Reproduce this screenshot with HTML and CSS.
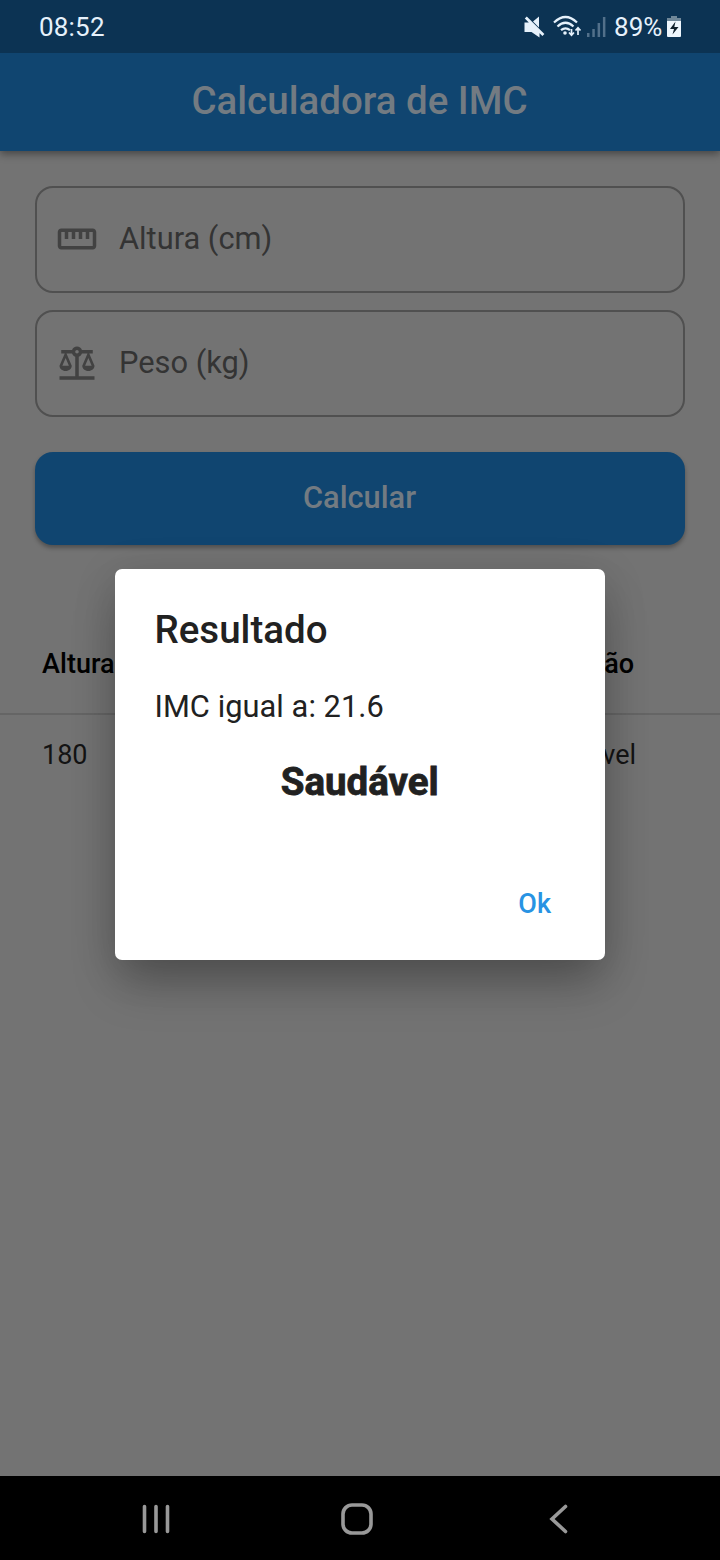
FILE: index.html
```html
<!DOCTYPE html>
<html lang="pt-BR">
<head>
<meta charset="utf-8">
<title>Calculadora de IMC</title>
<link rel="stylesheet" href="styles.css">
</head>
<body>
<div class="phone">
  <div class="status">
    <span class="clock">08:52</span>
    <div class="indicators">
      <svg class="mute" width="22" height="24" viewBox="0 0 22 24"><path d="M.5 7.500H6L15.500 17v5.500L7.500 17h-7zM9 6.500l6-5V12.500zM.8 3.400L2.800 1.400 20.400 19 18.400 21z" fill="#e6f1fb"/></svg>
      <svg class="wifi" width="30" height="24" viewBox="0 0 30 24"><g fill="none" stroke="#e6f1fb" stroke-width="2.200"><path d="M1 7.500Q12.500 -3.500 24 7.500M4.500 11.500Q12.500 4 20.500 11.500M8 15.200Q12.500 11.500 17 15.200"/><path stroke-width="1.700" d="M18.500 14v6M16 17.500l2.500 2.700 2.500-2.700M25 20v-7M22.500 15.500l2.500-2.700 2.500 2.700"/></g><circle cx="12" cy="18" r="1.800" fill="#e6f1fb"/></svg>
      <svg class="signal" width="19" height="22" viewBox="0 0 19 22"><path d="M0 17h2.500v4H0zM5.300 13h2.500v8H5.300zM10.600 7h2.500v14h-2.500zM15.900 1h2.500v20h-2.500z" fill="#52708a"/></svg>
      <span class="percent">89%</span>
      <svg class="battery" width="15" height="22" viewBox="0 0 15 22"><path d="M4 0h6v2h4v4H0V2h4z" fill="#6f8798"/><path d="M0 5h14v15q0 1-1 1H1q-1 0-1-1z" fill="#eef6fd"/><path d="M8.500 5.500L3 13h4l-1.500 5.500L11.500 11H7.300z" fill="#10202c"/></svg>
    </div>
  </div>
  <header class="appbar">Calculadora de IMC</header>
  <main class="content">
    <div class="form">
      <div class="field">
        <svg class="icon ruler" viewBox="0 0 24 24"><path d="M21 6H3c-1.100 0-2 .9-2 2v8c0 1.100.9 2 2 2h18c1.100 0 2-.9 2-2V8c0-1.100-.9-2-2-2zm0 10H3V8h2v4h2V8h2v4h2V8h2v4h2V8h2v4h2V8h2v8z"/></svg>
        <span>Altura (cm)</span>
      </div>
      <div class="field">
        <svg class="icon" viewBox="0 0 24 24"><path d="M13,7.830c0.850-0.300,1.530-0.980,1.830-1.830H18l-3,7c0,1.660,1.570,3,3.500,3s3.500-1.340,3.500-3l-3-7h2V4h-6.170C14.420,2.830,13.310,2,12,2S9.580,2.830,9.170,4L3,4v2h2l-3,7c0,1.660,1.570,3,3.500,3S9,14.660,9,13L6,6h3.170c0.300,0.850,0.980,1.530,1.830,1.830V19H2v2h20v-2h-9V7.830z M20.370,13h-3.740l1.870-4.360L20.370,13z M7.370,13H3.630L5.500,8.640L7.370,13z M12,6c-0.550,0-1-0.450-1-1c0-0.550,0.450-1,1-1s1,0.450,1,1C13,5.550,12.550,6,12,6z"/></svg>
        <span>Peso (kg)</span>
      </div>
      <div class="calc">Calcular</div>
    </div>
    <div class="table">
      <div class="row head"><span>Altura</span><span>Situação</span></div>
      <div class="row"><span>180</span><span>Saudável</span></div>
    </div>
    <section class="dialog">
      <h2 class="title">Resultado</h2>
      <p class="text">IMC igual a: 21.6</p>
      <p class="verdict">Saudável</p>
      <div class="actions"><span class="ok">Ok</span></div>
    </section>
  </main>
  <nav class="navbar">
    <svg width="28" height="30" viewBox="0 0 28 30"><path d="M2.500 2.500v25M14 2.500v25M25.500 2.500v25"/></svg>
    <svg class="home" width="32" height="32" viewBox="0 0 32 32"><rect x="2" y="2" width="28" height="28" rx="9"/></svg>
    <svg width="20" height="30" viewBox="0 0 20 30"><path d="M16.500 2.500L3 15l13.500 12.500"/></svg>
  </nav>
</div>
</body>
</html>
```
FILE: styles.css
```css
* { box-sizing: border-box; }
body { margin: 0; font-family: Roboto, "Liberation Sans", sans-serif; }
.phone { width: 720px; height: 1560px; display: flex; flex-direction: column; background: #737373; overflow: hidden; }
.status { height: 53px; flex: none; background: #0c3353; color: #e6f1fb; display: flex; justify-content: space-between; align-items: center; padding: 0 38px 0 39px; font-size: 26px; z-index: 2; }
.clock { letter-spacing: 0.2px; line-height: 30px; }
.indicators { display: flex; align-items: center; }
.mute { margin-right: 7px; }
.wifi { margin-right: 4px; }
.signal { margin-right: 8px; }
.percent { letter-spacing: .1px; margin-right: 4.500px; }
.appbar { height: 98px; flex: none; display: flex; align-items: center; justify-content: center; background: #104570; color: #737b82; font-size: 38.5px; font-weight: 500; padding: 0 1px 4px 0; box-shadow: 0 3px 8px rgba(0,0,0,.4); z-index: 1; }
.content { flex: 1; position: relative; }
.form { padding: 35px 35px 0; display: flex; flex-direction: column; }
.field { height: 107px; margin-bottom: 17px; border: 2px solid #505050; border-radius: 18px; display: flex; align-items: center; gap: 21px; padding-left: 19px; font-size: 30.8px; color: #343434; }
.field span { padding-bottom: 2px; }
.icon { width: 42px; height: 42px; fill: #424242; flex: none; }
.ruler { margin-bottom: 2px; }
.calc { height: 93px; margin-top: 18px; border-radius: 18px; background: #104570; color: #737b82; display: flex; align-items: center; justify-content: center; font-size: 30.8px; font-weight: 500; padding: 0 1px 2px 0; box-shadow: 0 3px 4px rgba(0,0,0,.3); }
.table { margin-top: 70px; }
.row { display: grid; grid-template-columns: 485px 1fr; padding-left: 42px; height: 80px; align-items: center; font-size: 27px; color: #141414; }
.head { grid-template-columns: 486px 1fr; height: 100px; color: #000; font-weight: 500; letter-spacing: .05px; border-bottom: 2px solid #656565; }
.dialog { position: absolute; left: 115px; top: 418px; width: 490px; height: 391px; padding: 38px 40px 0 39.5px; background: #fff; border-radius: 7px; color: #212121; box-shadow: 0 28px 48px -6px rgba(0,0,0,.26), 0 8px 44px 0 rgba(0,0,0,.14); }
.title { margin: 0; font-size: 38.5px; line-height: 46px; font-weight: 500; }
.text { margin: 36px 0 0; font-size: 30.8px; line-height: 36px; letter-spacing: .05px; }
.verdict { margin: 34px 0 0; font-size: 38.5px; line-height: 46px; font-weight: 700; text-align: center; -webkit-text-stroke: .8px #212121; }
.actions { display: flex; justify-content: flex-end; padding: 83px 14px 0 0; }
.ok { font-size: 27px; line-height: 32px; font-weight: 500; color: #2893e3; }
.navbar { height: 84px; flex: none; background: #000; display: flex; align-items: center; justify-content: space-between; padding: 2px 151px 0 142px; }
.home { margin-right: 5px; }
.navbar svg { fill: none; stroke: #999; stroke-width: 3.6; stroke-linecap: round; }
```
